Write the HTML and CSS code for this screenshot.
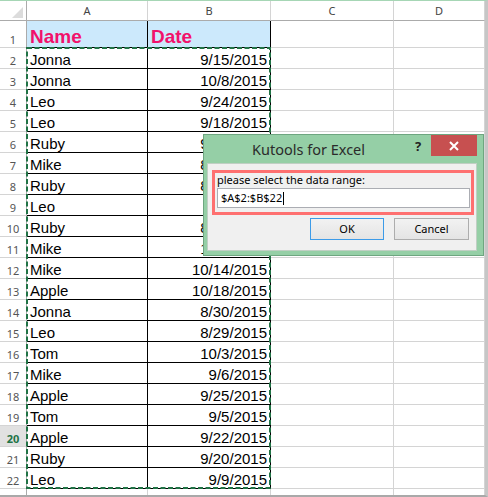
FILE: index.html
```html
<!DOCTYPE html>
<html>
<head>
<meta charset="utf-8">
<link rel="stylesheet" href="styles.css">
</head>
<body>
<div class="screen">
  <div class="sheet">
    <div class="corner"><svg width="11" height="11" viewBox="0 0 11 11"><polygon points="0,11 11,0 11,11" fill="#dcdcdc"/></svg></div>
    <div class="ch">A</div>
    <div class="ch">B</div>
    <div class="ch">C</div>
    <div class="ch">D</div>

    <div class="rh">1</div>
    <div class="c hd">Name</div>
    <div class="c hd">Date</div>
    <div class="c"></div>
    <div class="c"></div>

    <div class="rh">2</div><div class="c b">Jonna</div><div class="c b r">9/15/2015</div><div class="c"></div><div class="c"></div>
    <div class="rh">3</div><div class="c b">Jonna</div><div class="c b r">10/8/2015</div><div class="c"></div><div class="c"></div>
    <div class="rh">4</div><div class="c b">Leo</div><div class="c b r">9/24/2015</div><div class="c"></div><div class="c"></div>
    <div class="rh">5</div><div class="c b">Leo</div><div class="c b r">9/18/2015</div><div class="c"></div><div class="c"></div>
    <div class="rh">6</div><div class="c b">Ruby</div><div class="c b r">9/27/2015</div><div class="c"></div><div class="c"></div>
    <div class="rh">7</div><div class="c b">Mike</div><div class="c b r">8/15/2015</div><div class="c"></div><div class="c"></div>
    <div class="rh">8</div><div class="c b">Ruby</div><div class="c b r">8/16/2015</div><div class="c"></div><div class="c"></div>
    <div class="rh">9</div><div class="c b">Leo</div><div class="c b r">9/1/2015</div><div class="c"></div><div class="c"></div>
    <div class="rh">10</div><div class="c b">Ruby</div><div class="c b r">8/25/2015</div><div class="c"></div><div class="c"></div>
    <div class="rh">11</div><div class="c b">Mike</div><div class="c b r">10/1/2015</div><div class="c"></div><div class="c"></div>
    <div class="rh">12</div><div class="c b">Mike</div><div class="c b r">10/14/2015</div><div class="c"></div><div class="c"></div>
    <div class="rh">13</div><div class="c b">Apple</div><div class="c b r">10/18/2015</div><div class="c"></div><div class="c"></div>
    <div class="rh">14</div><div class="c b">Jonna</div><div class="c b r">8/30/2015</div><div class="c"></div><div class="c"></div>
    <div class="rh">15</div><div class="c b">Leo</div><div class="c b r">8/29/2015</div><div class="c"></div><div class="c"></div>
    <div class="rh">16</div><div class="c b">Tom</div><div class="c b r">10/3/2015</div><div class="c"></div><div class="c"></div>
    <div class="rh">17</div><div class="c b">Mike</div><div class="c b r">9/6/2015</div><div class="c"></div><div class="c"></div>
    <div class="rh">18</div><div class="c b">Apple</div><div class="c b r">9/25/2015</div><div class="c"></div><div class="c"></div>
    <div class="rh">19</div><div class="c b">Tom</div><div class="c b r">9/5/2015</div><div class="c"></div><div class="c"></div>
    <div class="rh active">20</div><div class="c b">Apple</div><div class="c b r">9/22/2015</div><div class="c"></div><div class="c"></div>
    <div class="rh">21</div><div class="c b">Ruby</div><div class="c b r">9/20/2015</div><div class="c"></div><div class="c"></div>
    <div class="rh">22</div><div class="c b">Leo</div><div class="c b r">9/9/2015</div><div class="c"></div><div class="c"></div>

    <div class="rh last"></div><div class="c last"></div><div class="c last"></div><div class="c last"></div><div class="c last"></div>
  </div>

  <svg class="ants" width="245" height="442" viewBox="0 0 245 442">
    <rect x="1" y="1" width="243" height="440" fill="none" stroke="#217346" stroke-width="2" stroke-dasharray="5 2.5"/>
  </svg>

  <div class="dialog">
    <div class="titlebar">
      <div class="title">Kutools for Excel</div>
      <div class="help">?</div>
      <div class="close"><svg width="10" height="10" viewBox="0 0 10 10"><path d="M1 1 L9 9 M9 1 L1 9" stroke="#fff" stroke-width="2"/></svg></div>
    </div>
    <div class="panel">
      <div class="hilite">
        <div class="label">please select the data range:</div>
        <div class="input">$A$2:$B$22<span class="caret"></span></div>
      </div>
      <div class="buttons">
        <div class="btn ok">OK</div>
        <div class="btn cancel">Cancel</div>
      </div>
    </div>
  </div>
</div>
</body>
</html>
```

FILE: styles.css
```css
body {
  margin: 0;
  background: #fff;
}

.screen {
  position: relative;
  width: 488px;
  height: 497px;
  box-sizing: border-box;
  border-top: 1px solid #a6d6b5;
  border-right: 3px solid #c6c6c6;
  border-bottom: 2px solid #a9a9a9;
  overflow: hidden;
  background: #fff;
  font-family: "Liberation Sans", Arial, sans-serif;
}

.sheet {
  display: grid;
  grid-template-columns: 27px 121px 123px 123px 91px;
  grid-template-rows: 20px 27px repeat(21, 21px) 6px;
}

.sheet > div {
  box-sizing: border-box;
  border-right: 1px solid #d4d4d4;
  border-bottom: 1px solid #d4d4d4;
  display: flex;
  align-items: flex-end;
  min-width: 0;
  overflow: hidden;
  white-space: nowrap;
}

.corner {
  justify-content: flex-end;
  padding: 0 3px 2px 0;
  border-right-color: #ababab !important;
  border-bottom-color: #ababab !important;
}

.ch {
  justify-content: center;
  font: 11px/14px "Noto Sans", sans-serif;
  color: #444;
  padding-bottom: 2px;
  border-bottom-color: #ababab !important;
}

.rh {
  justify-content: center;
  font: 11px/14px "Noto Sans", sans-serif;
  color: #555;
  border-right-color: #ababab !important;
}

.rh.active {
  background: #e1e1e1;
  color: #217346;
  font-weight: bold;
}

.c {
  font-size: 15px;
  line-height: 17px;
  padding: 0 3px;
  color: #000;
}

.c.r {
  justify-content: flex-end;
}

.c.b {
  border-right-color: #000 !important;
  border-bottom-color: #000 !important;
}

.c.hd {
  background: #cce9fc;
  color: #f2116b;
  font-weight: bold;
  font-size: 19px;
  line-height: 21px;
  border-right-color: #000 !important;
  border-bottom-color: #000 !important;
}

.sheet > .last {
  border-bottom: none;
}

.ants {
  position: absolute;
  left: 26px;
  top: 46px;
}

/* dialog */
.dialog {
  position: absolute;
  left: 203px;
  top: 133px;
  width: 281px;
  height: 122px;
  box-sizing: border-box;
  border: 1px solid #6ea680;
  background: #95cfa6;
  font-family: "Noto Sans", sans-serif;
  display: flex;
  flex-direction: column;
  z-index: 2;
}

.titlebar {
  height: 28px;
  display: flex;
  align-items: flex-start;
}

.title {
  flex: 1;
  padding-left: 48px;
  font-size: 14.5px;
  line-height: 28px;
  color: #2b2b2b;
}

.help {
  width: 26px;
  text-align: center;
  font-size: 13px;
  font-weight: bold;
  line-height: 22px;
  color: #222;
}

.close {
  width: 46px;
  height: 21px;
  margin-right: 6px;
  background: #c75050;
  display: flex;
  align-items: center;
  justify-content: center;
}

.panel {
  margin: 0 6px 0 3px;
  height: 88px;
  box-sizing: border-box;
  border: 1px solid #c0cfc4;
  background: #f0f0f0;
  display: flex;
  flex-direction: column;
}

.hilite {
  margin: 6px 2px 0 4px;
  border: 3px solid #fe7070;
  padding: 0 1px 4px 2px;
  display: flex;
  flex-direction: column;
}

.label {
  font-size: 11px;
  line-height: 13px;
  color: #000;
}

.input {
  margin-top: 2px;
  height: 20px;
  box-sizing: border-box;
  border: 1px solid #abadb3;
  background: #fff;
  font-size: 11px;
  line-height: 18px;
  padding-left: 3px;
  color: #000;
  display: flex;
  align-items: center;
}

.caret {
  display: inline-block;
  width: 1px;
  height: 13px;
  background: #000;
  margin-left: 1px;
}

.buttons {
  display: flex;
  justify-content: flex-end;
  gap: 10px;
  margin: 3px 7px 0 0;
}

.btn {
  height: 22px;
  box-sizing: border-box;
  border: 1px solid #adadad;
  background: linear-gradient(#f2f2f2, #e4e4e4);
  font-size: 11px;
  line-height: 20px;
  text-align: center;
  color: #000;
}

.btn.ok {
  width: 74px;
  border-color: #3c9be8;
}

.btn.cancel {
  width: 75px;
}
```
